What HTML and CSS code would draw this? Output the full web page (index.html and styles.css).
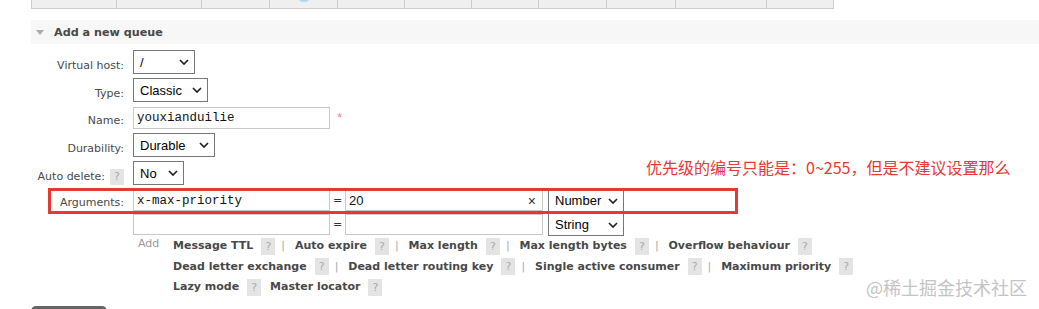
FILE: index.html
```html
<!DOCTYPE html>
<html lang="zh-CN">
<head>
    <meta charset="UTF-8">
    <meta name="viewport" content="width=device-width, initial-scale=1.0">
    <title>Queues</title>
    <link rel="stylesheet" href="styles.css">
</head>
<body>
<div class="page">
    <div class="list-bottom">
        <div class="cell"></div>
        <div class="cell"></div>
        <div class="cell"></div>
        <div class="cell"><span class="state-dot"></span></div>
        <div class="cell"></div>
        <div class="cell"></div>
        <div class="cell"></div>
        <div class="cell"></div>
        <div class="cell"></div>
        <div class="cell"></div>
        <div class="cell"></div>
    </div>

    <div class="section">
        <h2 class="section-head"><span class="arrow"></span>Add a new queue</h2>

        <div class="form">
            <div class="row">
                <label class="label">Virtual host:</label>
                <div class="select sel-vhost"><span>/</span><svg width="10" height="6" viewBox="0 0 10 6"><polyline points="1,1 5,5 9,1"/></svg></div>
            </div>
            <div class="row">
                <label class="label">Type:</label>
                <div class="select sel-type"><span>Classic</span><svg width="10" height="6" viewBox="0 0 10 6"><polyline points="1,1 5,5 9,1"/></svg></div>
            </div>
            <div class="row">
                <label class="label">Name:</label>
                <div class="name-field">
                    <input class="text mono name-input" type="text" value="youxianduilie">
                    <span class="req">*</span>
                </div>
            </div>
            <div class="row">
                <label class="label">Durability:</label>
                <div class="select sel-dur"><span>Durable</span><svg width="10" height="6" viewBox="0 0 10 6"><polyline points="1,1 5,5 9,1"/></svg></div>
            </div>
            <div class="row">
                <label class="label">Auto delete:<span class="help small">?</span></label>
                <div class="select sel-no"><span>No</span><svg width="10" height="6" viewBox="0 0 10 6"><polyline points="1,1 5,5 9,1"/></svg></div>
            </div>
            <div class="row args-row">
                <div class="highlight"></div>
                <label class="label">Arguments:</label>
                <div class="args">
                    <div class="arg">
                        <input class="text mono arg-key" type="text" value="x-max-priority">
                        <span class="eq">=</span>
                        <div class="arg-val">
                            <input class="text sans" type="text" value="20">
                            <span class="clear">×</span>
                        </div>
                        <div class="select sel-argtype"><span>Number</span><svg width="10" height="6" viewBox="0 0 10 6"><polyline points="1,1 5,5 9,1"/></svg></div>
                    </div>
                    <div class="arg">
                        <input class="text mono arg-key" type="text" value="">
                        <span class="eq">=</span>
                        <div class="arg-val">
                            <input class="text sans" type="text" value="">
                        </div>
                        <div class="select sel-argtype"><span>String</span><svg width="10" height="6" viewBox="0 0 10 6"><polyline points="1,1 5,5 9,1"/></svg></div>
                    </div>

                    <div class="add-row">
                        <span class="add-label">Add</span>
                        <div class="links">
                            <div class="links-line">
                                <span>Message TTL</span><span class="help">?</span><span class="sep">|</span>
                                <span>Auto expire</span><span class="help">?</span><span class="sep">|</span>
                                <span>Max length</span><span class="help">?</span><span class="sep">|</span>
                                <span>Max length bytes</span><span class="help">?</span><span class="sep">|</span>
                                <span>Overflow behaviour</span><span class="help">?</span>
                            </div>
                            <div class="links-line">
                                <span>Dead letter exchange</span><span class="help">?</span><span class="sep">|</span>
                                <span>Dead letter routing key</span><span class="help">?</span><span class="sep">|</span>
                                <span>Single active consumer</span><span class="help">?</span><span class="sep">|</span>
                                <span>Maximum priority</span><span class="help">?</span>
                            </div>
                            <div class="links-line">
                                <span>Lazy mode</span><span class="help">?</span>
                                <span class="spaced">Master locator</span><span class="help">?</span>
                            </div>
                        </div>
                    </div>
                </div>
            </div>
        </div>

        <button class="submit" aria-label="Add queue"></button>
    </div>

    <div class="note">优先级的编号只能是：0~255，但是不建议设置那么</div>
    <div class="watermark">@稀土掘金技术社区</div>
</div>
</body>
</html>
```

FILE: styles.css
```css
html, body {
    overflow: hidden;
}
body {
    margin: 0;
    background-color: #fff;
    color: #484848;
    font-family: "DejaVu Sans", Verdana, sans-serif;
    font-size: 11px;
}
.page {
    position: relative;
    padding-left: 31px;
}

/* bottom of the queue list above */
.list-bottom {
    display: grid;
    grid-template-columns: 85px 85px 68px 68px 67px 67px 67px 68px 69px 91px 67px;
    width: fit-content;
    border-right: 1px solid #ccc;
}
.cell {
    height: 9px;
    box-sizing: border-box;
    border-left: 1px solid #ccc;
    border-bottom: 1px solid #ccc;
    background-color: #efefef;
    display: flex;
    justify-content: center;
    overflow: hidden;
}
.state-dot {
    width: 16px;
    height: 16px;
    margin-top: -14px;
    border-radius: 50%;
    background-color: #a5d8f6;
}

.section-head {
    display: flex;
    align-items: center;
    height: 24px;
    margin: 11px 0 0 0;
    padding-left: 5px;
    background-color: #f7f7f7;
    font-size: 11.2px;
    font-weight: bold;
    color: #484848;
}
.arrow {
    width: 0;
    height: 0;
    margin-right: 10px;
    border-left: 4.5px solid transparent;
    border-right: 4.5px solid transparent;
    border-top: 5px solid #aaa;
}

.form {
    display: flex;
    flex-direction: column;
    gap: 4px;
    margin-top: 6px;
}
.row {
    display: grid;
    grid-template-columns: 93px 1fr;
    column-gap: 9px;
    align-items: center;
    justify-items: start;
}
.label {
    justify-self: end;
    text-align: right;
    line-height: 16px;
    padding-top: 7px;
}
.args-row {
    position: relative;
    align-items: start;
}
.args-row .label {
    padding-top: 6px;
}
.highlight {
    position: absolute;
    left: 17px;
    top: -1px;
    width: 690px;
    height: 26px;
    box-sizing: border-box;
    border: 3px solid #e53935;
    pointer-events: none;
}

.select {
    display: flex;
    align-items: center;
    justify-content: space-between;
    height: 24px;
    box-sizing: border-box;
    padding: 0 5px 0 6px;
    border: 1px solid #767676;
    background-color: #fff;
    color: #000;
    font-family: "Liberation Sans", Arial, sans-serif;
    font-size: 13px;
}
.select svg polyline {
    fill: none;
    stroke: #222;
    stroke-width: 1.7;
}
.sel-vhost { width: 62px; }
.sel-type { width: 75px; }
.sel-dur { width: 82px; }
.sel-no { width: 51px; }
.sel-argtype {
    width: 76px;
    height: 23px;
    margin-left: 5px;
}

.text {
    box-sizing: border-box;
    margin: 0;
    padding: 0 3px;
    border: 1px solid #c8c8c8;
    outline: none;
    color: #111;
    background-color: #fff;
}
.mono {
    font-family: "Liberation Mono", "Courier New", monospace;
    font-size: 12.5px;
}
.sans {
    font-family: "Liberation Sans", Arial, sans-serif;
    font-size: 13px;
}
.name-field {
    display: flex;
    align-items: center;
}
.name-input {
    width: 197px;
    height: 22px;
}
.req {
    margin-left: 7px;
    color: #f08a8a;
    font-family: "Liberation Sans", Arial, sans-serif;
    font-size: 13px;
}

.args {
    display: flex;
    flex-direction: column;
}
.arg {
    display: flex;
    align-items: flex-start;
}
.arg + .arg {
    margin-top: 1px;
}
.arg-key {
    width: 197px;
    height: 21px;
    margin-top: 1px;
}
.eq {
    width: 15px;
    margin-top: 1px;
    line-height: 21px;
    text-align: center;
    color: #333;
}
.arg-val {
    display: flex;
    align-items: center;
    width: 198px;
    height: 21px;
    margin-top: 1px;
    box-sizing: border-box;
    border: 1px solid #c8c8c8;
}
.arg-val .text {
    flex: 1;
    min-width: 0;
    height: 19px;
    border: none;
}
.clear {
    margin: 0 6px 0 4px;
    color: #333;
    font-family: "Liberation Sans", Arial, sans-serif;
    font-size: 14px;
}

.add-row {
    display: flex;
    padding-left: 5px;
}
.add-label {
    width: 35px;
    line-height: 16px;
    color: #999;
}
.links {
    font-weight: bold;
    color: #484848;
}
.links-line {
    line-height: 20.5px;
    white-space: nowrap;
}
.help {
    display: inline-block;
    width: 14px;
    height: 17px;
    margin-left: 8px;
    line-height: 17px;
    vertical-align: middle;
    text-align: center;
    background-color: #e4e4e4;
    color: #aaa;
    font-weight: normal;
}
.help.small {
    height: 16px;
    line-height: 16px;
    margin-left: 5px;
}
.sep {
    margin: 0 6px;
    color: #aaa;
    font-weight: normal;
}
.spaced {
    margin-left: 5px;
}

.submit {
    display: block;
    width: 76px;
    height: 24px;
    margin-top: 8px;
    border: none;
    border-radius: 5px;
    background-color: #666;
}

.note {
    position: absolute;
    left: 646px;
    top: 156px;
    line-height: 22px;
    font-family: "Noto Sans CJK SC", sans-serif;
    font-size: 16px;
    color: #e53935;
    white-space: nowrap;
}
.watermark {
    position: absolute;
    left: 866px;
    top: 275px;
    line-height: 24px;
    font-family: "Noto Sans CJK SC", sans-serif;
    font-size: 18px;
    color: #c4c4c4;
    white-space: nowrap;
}
```
